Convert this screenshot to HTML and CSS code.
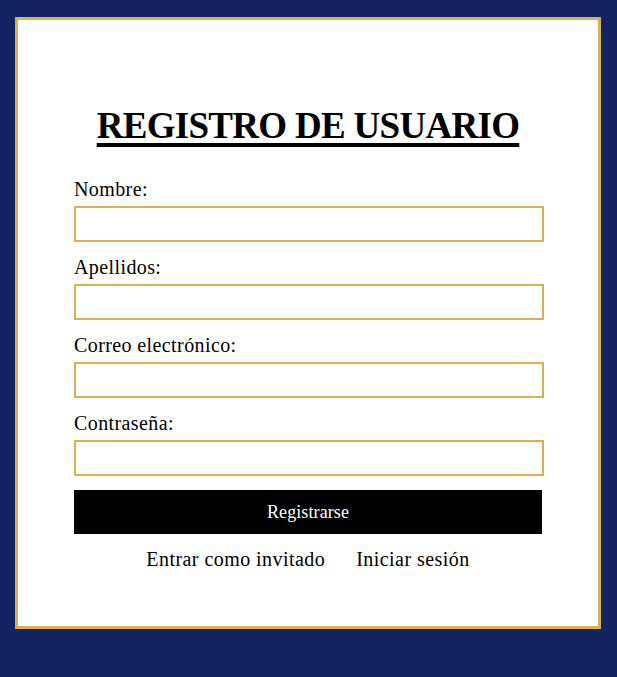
FILE: index.html
```html
<!DOCTYPE html>
<html lang="es">
<head>
<meta charset="utf-8">
<title>Registro de usuario</title>
<link rel="stylesheet" href="styles.css">
</head>
<body>
<main class="panel">
  <h1 class="title">REGISTRO DE USUARIO</h1>
  <form class="form">
    <div class="field">
      <label class="label" for="nombre">Nombre:</label>
      <input class="input" id="nombre" type="text">
    </div>
    <div class="field">
      <label class="label" for="apellidos">Apellidos:</label>
      <input class="input" id="apellidos" type="text">
    </div>
    <div class="field">
      <label class="label" for="correo">Correo electrónico:</label>
      <input class="input" id="correo" type="email">
    </div>
    <div class="field">
      <label class="label" for="pass">Contraseña:</label>
      <input class="input" id="pass" type="password">
    </div>
    <button class="submit" type="button">Registrarse</button>
  </form>
  <nav class="links">
    <a class="link" href="#">Entrar como invitado</a>
    <a class="link" href="#">Iniciar sesión</a>
  </nav>
</main>
</body>
</html>
```
FILE: styles.css
```css
html, body {
  margin: 0;
  padding: 0;
}
body {
  background: #142361;
  padding: 17px 16px 0 15px;
  min-height: 677px;
  box-sizing: border-box;
  font-family: "Liberation Serif", "Times New Roman", serif;
  color: #000;
}
.panel {
  background: #fff;
  border: 3px solid #dab24d;
  height: 612px;
  box-sizing: border-box;
  padding-top: 84px;
  display: flex;
  flex-direction: column;
  align-items: center;
}
.title {
  margin: 0 0 29px 0;
  font-size: 37px;
  line-height: 44px;
  font-weight: bold;
  letter-spacing: -0.7px;
  text-decoration: underline;
  text-decoration-thickness: 4px;
  text-underline-offset: 5px;
  text-align: center;
}
.form {
  width: 470px;
  margin-left: 2px;
  display: flex;
  flex-direction: column;
}
.field {
  display: flex;
  flex-direction: column;
  margin-bottom: 13px;
}
.field:last-of-type {
  margin-bottom: 14px;
}
.label {
  font-size: 20px;
  line-height: 24px;
  letter-spacing: 0.4px;
  margin-bottom: 5px;
}
.input {
  height: 36px;
  box-sizing: border-box;
  border: 2px solid #dab24d;
  margin: 0;
  padding: 0 8px;
  font: inherit;
  background: #fff;
  outline: none;
}
.submit {
  width: 468px;
  height: 44px;
  border: none;
  margin: 0;
  background: #000;
  color: #fff;
  font-family: "Liberation Serif", "Times New Roman", serif;
  font-size: 18px;
  letter-spacing: 0.1px;
  cursor: pointer;
}
.links {
  margin-top: 13px;
  display: flex;
  gap: 31px;
  justify-content: center;
}
.link {
  font-size: 20px;
  line-height: 24px;
  letter-spacing: 0.45px;
  color: #000;
  text-decoration: none;
}
```
